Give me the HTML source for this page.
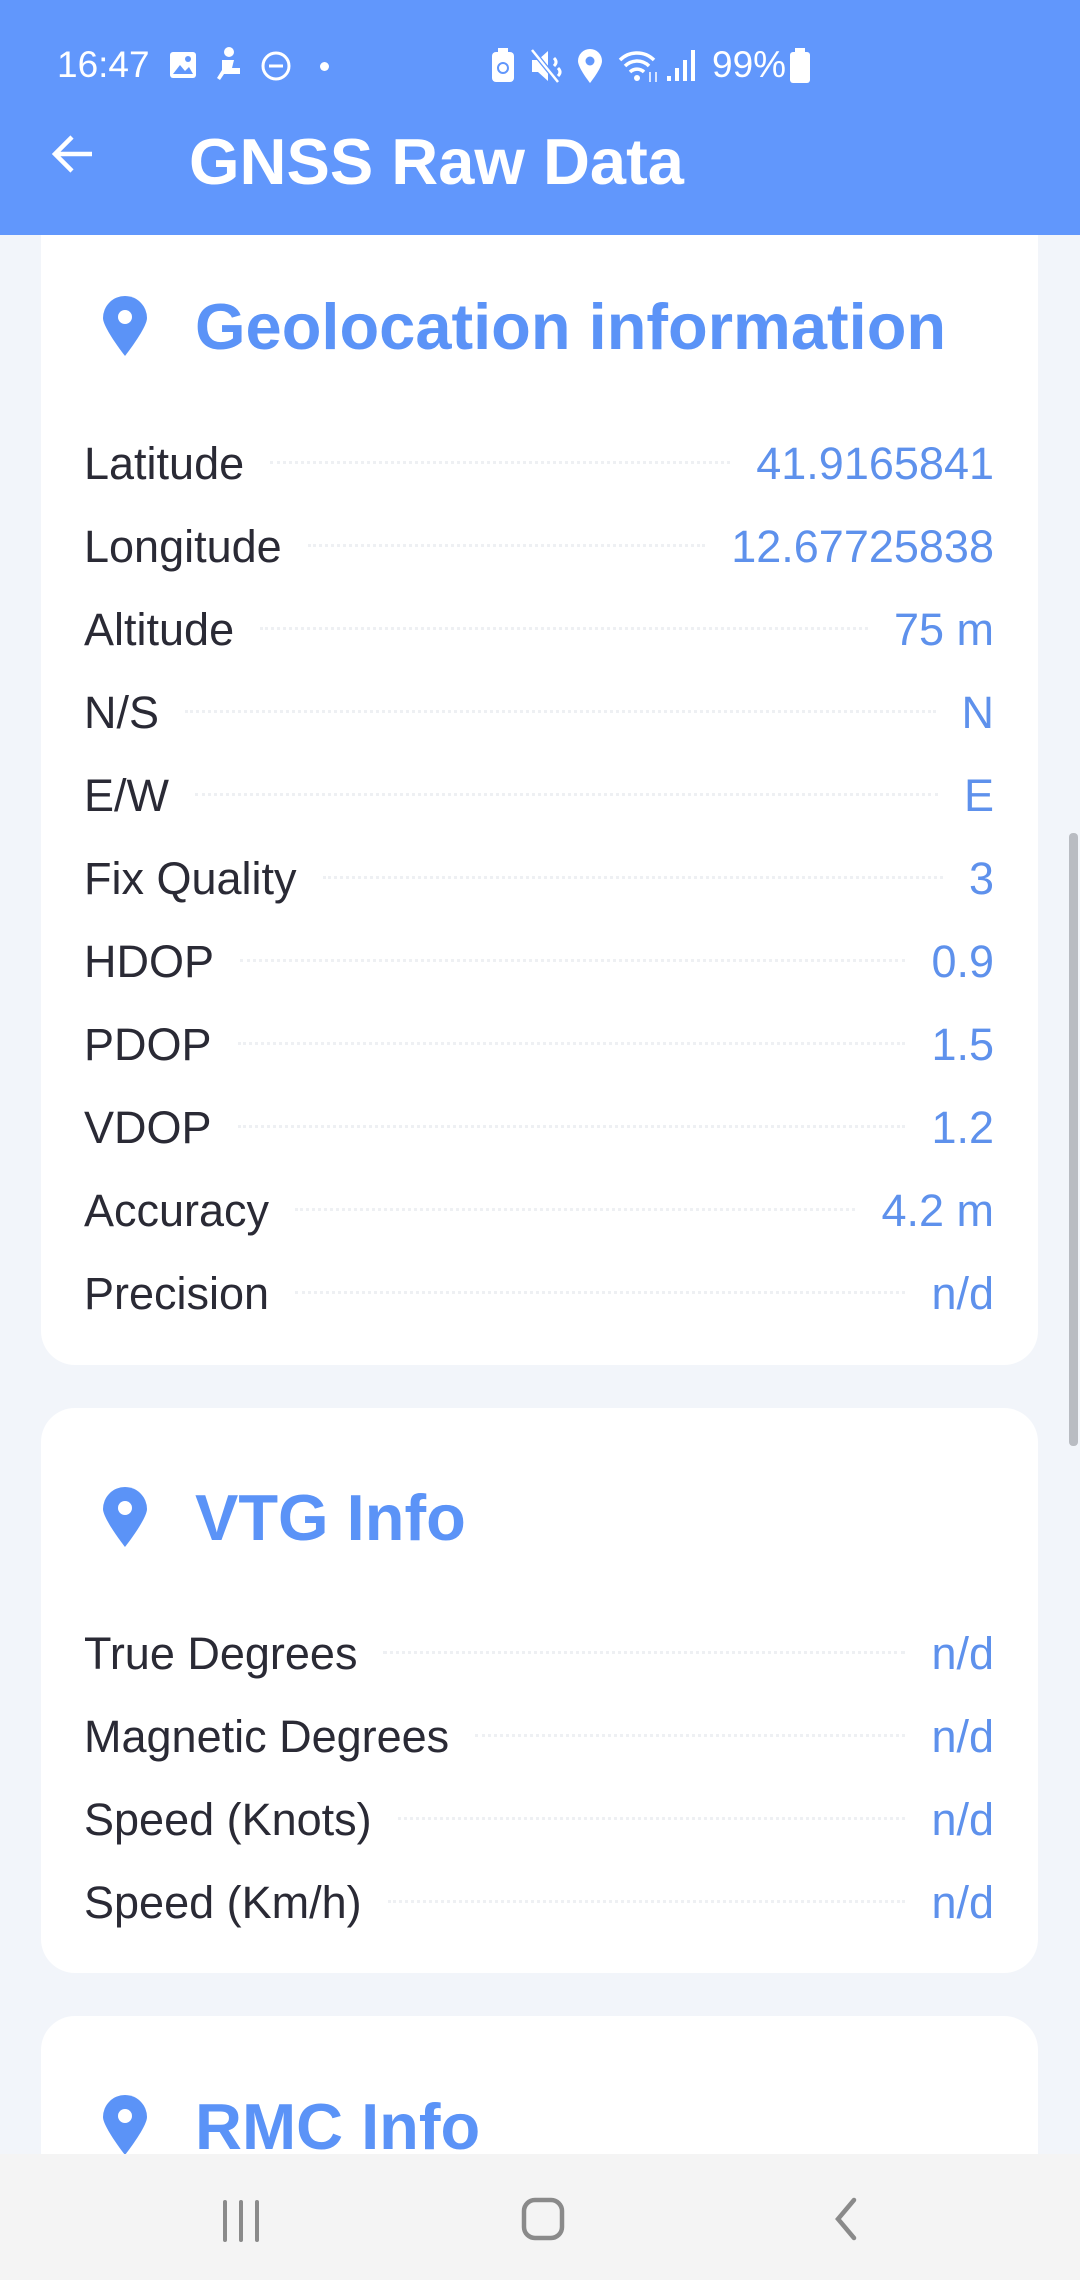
<!DOCTYPE html>
<html><head><meta charset="utf-8"><style>
*{margin:0;padding:0;box-sizing:border-box}
html{width:1080px;height:2280px;overflow:hidden}
body{width:1080px;height:2280px;background:#f2f5fa;position:relative;overflow:hidden;font-family:"Liberation Sans",sans-serif}
.appbar{position:absolute;left:0;top:0;width:1080px;height:235px;background:#6197fc;z-index:5}
.sb{position:absolute;top:44px;color:#fff;font-size:37px}
.title{position:absolute;left:189px;top:124px;color:#fff;font-size:65px;font-weight:bold}
.card{position:absolute;left:41px;width:997px;background:#fff;border-radius:34px}
.hd{position:absolute;left:195px;font-size:65px;font-weight:bold;color:#5b93f7;line-height:1}
.pin{position:absolute;left:99px;width:52px;height:60px}
.row{position:absolute;left:84px;width:910px;height:60px;display:flex;align-items:center;font-size:45px}
.row .l{color:#2a2a35}
.row .d{flex:1;border-bottom:3px dotted #eef0f3;margin:0 26px;height:0;position:relative;top:-2px}
.row .v{color:#5e91ec}
.nav{position:absolute;left:0;top:2154px;width:1080px;height:126px;background:#f4f4f4;z-index:5}
.scroll{position:absolute;left:1069px;top:833px;width:9px;height:613px;background:#b9bcc2;border-radius:4px}
</style></head><body>
<div class="appbar">
<div class="sb" style="left:57px">16:47</div>
<svg style="position:absolute;left:168px;top:50px" width="30" height="30" viewBox="0 0 30 30"><rect x="2" y="2" width="26" height="26" rx="3" fill="#fff"/><path d="M5 24 L12 15 L17 21 L21 17 L25 24Z" fill="#6197fc"/><circle cx="20" cy="9" r="3" fill="#6197fc"/></svg>
<svg style="position:absolute;left:214px;top:46px" width="30" height="36" viewBox="0 0 30 36"><circle cx="15" cy="6" r="5" fill="#fff"/><path d="M8 14h12l-2 8h8v6H10l-4 6-3-2 5-8z" fill="#fff"/></svg>
<svg style="position:absolute;left:260px;top:50px" width="32" height="32" viewBox="0 0 32 32"><circle cx="16" cy="16" r="13" fill="none" stroke="#fff" stroke-width="3"/><rect x="9" y="14.5" width="14" height="3" fill="#fff"/></svg>
<div style="position:absolute;left:320px;top:62px;width:9px;height:9px;border-radius:50%;background:#fff"></div>
<svg style="position:absolute;left:490px;top:48px" width="26" height="36" viewBox="0 0 26 36"><rect x="8" y="0" width="10" height="4" fill="#fff"/><rect x="2" y="4" width="22" height="30" rx="4" fill="#fff"/><circle cx="13" cy="20" r="5" fill="none" stroke="#6197fc" stroke-width="2"/></svg>
<svg style="position:absolute;left:530px;top:48px" width="34" height="36" viewBox="0 0 34 36"><path d="M2 12h6l10-9v30l-10-9H2z" fill="#fff"/><path d="M2 2L28 34" stroke="#6197fc" stroke-width="5"/><path d="M2 2L28 34" stroke="#fff" stroke-width="2.5"/><path d="M24 10q4 4 0 8M28 20q4 4 0 8" stroke="#fff" stroke-width="3" fill="none"/></svg>
<svg style="position:absolute;left:576px;top:48px" width="28" height="36" viewBox="0 0 28 36"><path d="M14 35C14 35 2 20 2 13a12 12 0 0 1 24 0c0 7-12 22-12 22z" fill="#fff"/><circle cx="14" cy="13" r="4.5" fill="#6197fc"/></svg>
<svg style="position:absolute;left:618px;top:48px" width="44" height="36" viewBox="0 0 44 36"><path d="M2 12a24 24 0 0 1 34 0M7 18a17 17 0 0 1 24 0M12 24a10 10 0 0 1 14 0" stroke="#fff" stroke-width="3.5" fill="none"/><circle cx="19" cy="30" r="3" fill="#fff"/><path d="M32 24v10M38 24v10" stroke="#d8e5ff" stroke-width="2"/></svg>
<svg style="position:absolute;left:665px;top:48px" width="36" height="34" viewBox="0 0 36 34"><rect x="2" y="28" width="4" height="5" fill="#fff"/><rect x="10" y="20" width="4" height="13" fill="#fff"/><rect x="18" y="12" width="4" height="21" fill="#fff"/><rect x="26" y="2" width="4" height="31" fill="#fff"/></svg>
<div class="sb" style="left:712px">99%</div>
<svg style="position:absolute;left:788px;top:48px" width="24" height="36" viewBox="0 0 24 36"><rect x="7" y="0" width="10" height="4" fill="#fff"/><rect x="2" y="4" width="20" height="31" rx="3" fill="#fff"/></svg>
<svg style="position:absolute;left:50px;top:132px" width="46" height="44" viewBox="0 0 46 44"><path d="M42 22H6M22 5L5 22l17 17" stroke="#fff" stroke-width="4.5" fill="none"/></svg>
<div class="title">GNSS Raw Data</div>
</div>

<div class="card" style="top:200px;height:1165px"></div>
<svg class="pin" style="top:296px" viewBox="0 0 52 60"><path d="M26 60C26 60 4 32 4 22a22 22 0 0 1 44 0c0 10-22 38-22 38z" fill="#5b93f7"/><circle cx="26" cy="21" r="7" fill="#fff"/></svg>
<div class="hd" style="top:294px">Geolocation information</div>

<div class="row" style="top:434px"><span class="l">Latitude</span><span class="d"></span><span class="v">41.9165841</span></div>
<div class="row" style="top:517px"><span class="l">Longitude</span><span class="d"></span><span class="v">12.67725838</span></div>
<div class="row" style="top:600px"><span class="l">Altitude</span><span class="d"></span><span class="v">75 m</span></div>
<div class="row" style="top:683px"><span class="l">N/S</span><span class="d"></span><span class="v">N</span></div>
<div class="row" style="top:766px"><span class="l">E/W</span><span class="d"></span><span class="v">E</span></div>
<div class="row" style="top:849px"><span class="l">Fix Quality</span><span class="d"></span><span class="v">3</span></div>
<div class="row" style="top:932px"><span class="l">HDOP</span><span class="d"></span><span class="v">0.9</span></div>
<div class="row" style="top:1015px"><span class="l">PDOP</span><span class="d"></span><span class="v">1.5</span></div>
<div class="row" style="top:1098px"><span class="l">VDOP</span><span class="d"></span><span class="v">1.2</span></div>
<div class="row" style="top:1181px"><span class="l">Accuracy</span><span class="d"></span><span class="v">4.2 m</span></div>
<div class="row" style="top:1264px"><span class="l">Precision</span><span class="d"></span><span class="v">n/d</span></div>

<div class="card" style="top:1408px;height:565px"></div>
<svg class="pin" style="top:1487px" viewBox="0 0 52 60"><path d="M26 60C26 60 4 32 4 22a22 22 0 0 1 44 0c0 10-22 38-22 38z" fill="#5b93f7"/><circle cx="26" cy="21" r="7" fill="#fff"/></svg>
<div class="hd" style="top:1485px">VTG Info</div>
<div class="row" style="top:1624px"><span class="l">True Degrees</span><span class="d"></span><span class="v">n/d</span></div>
<div class="row" style="top:1707px"><span class="l">Magnetic Degrees</span><span class="d"></span><span class="v">n/d</span></div>
<div class="row" style="top:1790px"><span class="l">Speed (Knots)</span><span class="d"></span><span class="v">n/d</span></div>
<div class="row" style="top:1873px"><span class="l">Speed (Km/h)</span><span class="d"></span><span class="v">n/d</span></div>

<div class="card" style="top:2016px;height:200px"></div>
<svg class="pin" style="top:2095px" viewBox="0 0 52 60"><path d="M26 60C26 60 4 32 4 22a22 22 0 0 1 44 0c0 10-22 38-22 38z" fill="#5b93f7"/><circle cx="26" cy="21" r="7" fill="#fff"/></svg>
<div class="hd" style="top:2094px">RMC Info</div>

<div class="scroll"></div>

<div class="nav">
<svg style="position:absolute;left:220px;top:44px" width="44" height="46" viewBox="0 0 44 46"><path d="M5 4v38M21 4v38M37 4v38" stroke="#8a8a8a" stroke-width="4" stroke-linecap="round"/></svg>
<svg style="position:absolute;left:520px;top:42px" width="46" height="46" viewBox="0 0 46 46"><rect x="4" y="4" width="38" height="38" rx="11" fill="none" stroke="#8a8a8a" stroke-width="4.5"/></svg>
<svg style="position:absolute;left:830px;top:42px" width="30" height="46" viewBox="0 0 30 46"><path d="M24 4L8 23l16 19" stroke="#8a8a8a" stroke-width="4.5" fill="none" stroke-linecap="round"/></svg>
</div>
</body></html>
